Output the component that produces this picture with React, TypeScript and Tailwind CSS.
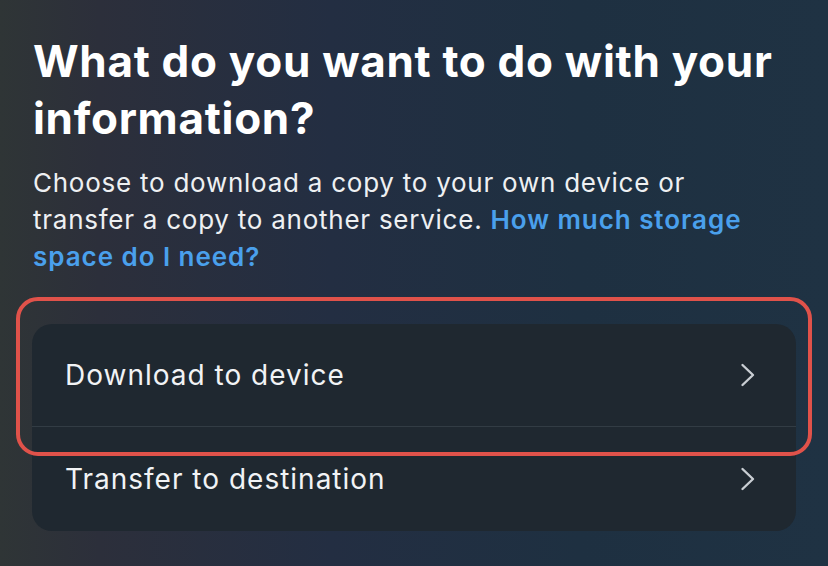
import React from "react";

function Chevron() {
  return (
    <svg width="16" height="24" viewBox="0 0 16 24" fill="none" className="shrink-0">
      <path d="M2.5 2 L13 12 L2.5 22" stroke="#c9ced3" strokeWidth="2.4" strokeLinecap="round" strokeLinejoin="round" />
    </svg>
  );
}

export default function App() {
  return (
    <div
      className="w-[828px] h-[566px] overflow-hidden bg-[linear-gradient(90deg,#2f3536_0%,#2c2f3b_12%,#232e42_40%,#1e3041_70%,#1f3243_100%)] text-white"
      style={{ fontFamily: "Inter, 'Noto Sans', sans-serif" }}
    >
      <div className="pl-[33px] pr-[40px] pt-[33px]">
        <h1 className="text-[44px] leading-[57px] font-bold tracking-[0.7px]">
          What do you want to do with your information?
        </h1>
        <p className="mt-[17px] w-[740px] text-[26px] leading-[37px] tracking-[0.75px] text-[#eef0f2]">
          Choose to download a copy to your own device or transfer a copy to another service.{" "}
          <span className="font-semibold text-[#4aa0ec] tracking-[0.95px]">How much storage space do I need?</span>
        </p>
      </div>
      <div className="relative mt-[49px] mx-[16px]">
        <div className="absolute left-0 right-0 top-[-27px] h-[159px] rounded-[22px] border-[4px] border-[#e0524a] pointer-events-none z-10" />
        <div className="mx-[16px] rounded-[20px] bg-[#1f2830]">
          <div className="h-[103px] flex items-center justify-between pl-[33px] pr-[40px] border-b border-[#323c44]">
            <span className="text-[28px] tracking-[1px] text-[#f1f3f5]">Download to device</span>
            <Chevron />
          </div>
          <div className="h-[104px] flex items-center justify-between pl-[33px] pr-[40px]">
            <span className="text-[28px] tracking-[1px] text-[#f1f3f5]">Transfer to destination</span>
            <Chevron />
          </div>
        </div>
      </div>
    </div>
  );
}
